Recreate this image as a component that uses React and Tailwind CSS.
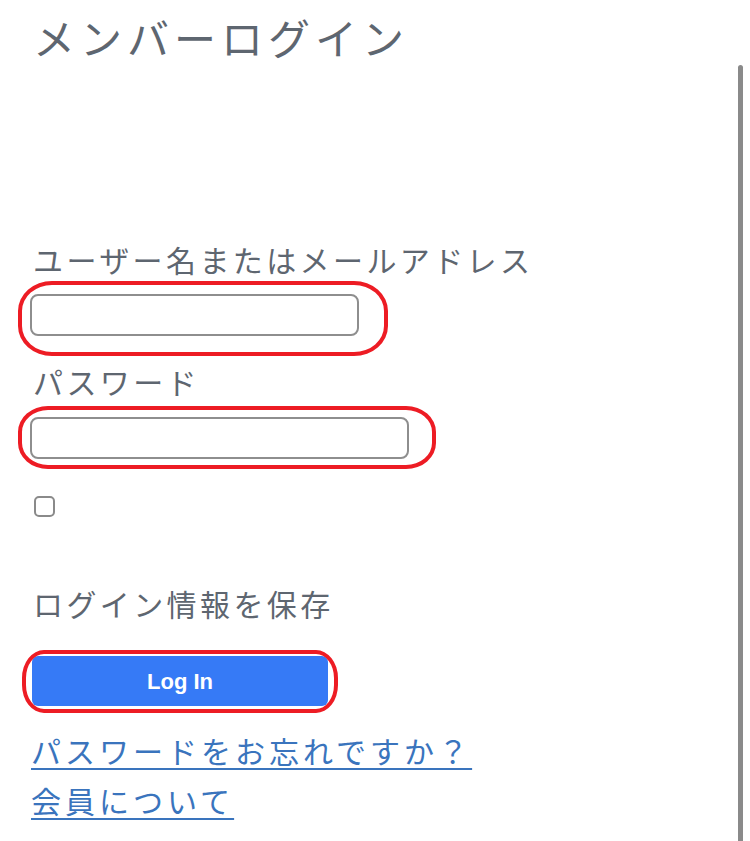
import React from "react";

const jp = { fontFamily: '"Noto Sans CJK JP", "Noto Sans", sans-serif' };

function RedRing({ className }) {
  return (
    <div
      className={
        "pointer-events-none absolute border-[4px] border-[#ed1c24] " + className
      }
    />
  );
}

export default function App() {
  return (
    <div className="relative min-h-[841px] w-[750px] overflow-hidden bg-white" style={jp}>
      <div className="pl-[33px] pt-[12px]">
        <h1 className="text-[42px] leading-[50px] font-normal tracking-[5px] text-[#5e6670]">
          メンバーログイン
        </h1>

        <label className="mt-[179px] block text-[30px] leading-[36px] tracking-[3.4px] text-[#5e6670]">
          ユーザー名またはメールアドレス
        </label>
        <div className="relative mt-[17px] ml-[-3px] h-[42px] w-[329px]">
          <input
            type="text"
            className="h-full w-full rounded-[8px] border-[2px] border-[#8e8e8e] bg-white outline-none"
          />
          <RedRing className="left-[-12px] top-[-13px] h-[75px] w-[370px] rounded-[34px/30px]" />
        </div>

        <label className="mt-[27px] block text-[30px] leading-[36px] tracking-[3.4px] text-[#5e6670]">
          パスワード
        </label>
        <div className="relative mt-[18px] ml-[-3px] h-[42px] w-[379px]">
          <input
            type="password"
            className="h-full w-full rounded-[8px] border-[2px] border-[#8e8e8e] bg-white outline-none"
          />
          <RedRing className="left-[-12px] top-[-11px] h-[63px] w-[418px] rounded-[30px/26px]" />
        </div>

        <div className="mt-[37px] ml-[1px] h-[21px] w-[21px] rounded-[5px] border-[2px] border-[#8a8a8a]" />

        <div className="mt-[68px] text-[30px] leading-[36px] tracking-[3.4px] text-[#5e6670]">
          ログイン情報を保存
        </div>

        <div className="relative mt-[35px] ml-[-1px] h-[50px] w-[296px]">
          <button
            className="flex h-full w-full items-center justify-center rounded-[6px] bg-[#367af6] text-[22px] font-bold text-white"
            style={{ fontFamily: '"Liberation Sans", Arial, sans-serif' }}
          >
            Log In
          </button>
          <RedRing className="left-[-10px] top-[-6px] h-[63px] w-[316px] rounded-[22px/28px]" />
        </div>

        <div className="mt-[19px] flex flex-col items-start">
          <a
            href="#"
            className="ml-[-2px] text-[30px] leading-[50px] tracking-[4px] text-[#3a74bd] underline decoration-[2px] underline-offset-[5px]"
          >
            パスワードをお忘れですか？
          </a>
          <a
            href="#"
            className="ml-[-2px] text-[30px] leading-[50px] tracking-[4px] text-[#3a74bd] underline decoration-[2px] underline-offset-[5px]"
          >
            会員について
          </a>
        </div>
      </div>

      <div className="absolute right-[7px] top-[65px] h-[800px] w-[5px] rounded-t-full bg-[#8a8a8a]" />
    </div>
  );
}
